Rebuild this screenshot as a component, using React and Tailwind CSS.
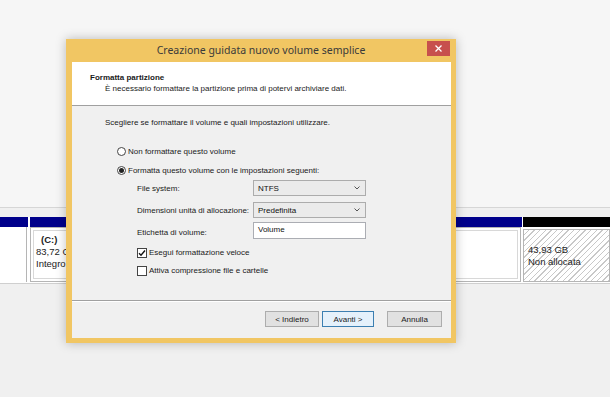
import React from "react";

const Radio = ({ checked }) => (
  <span className="w-[9px] h-[9px] rounded-full border border-[#444] bg-white flex items-center justify-center shrink-0">
    {checked && <span className="w-[5px] h-[5px] rounded-full bg-[#222]" />}
  </span>
);

const Check = ({ checked }) => (
  <span className="w-[10px] h-[10px] border border-[#444] bg-white flex items-center justify-center shrink-0">
    {checked && (
      <svg width="8" height="8" viewBox="0 0 8 8">
        <path d="M1 4.2 L3 6.2 L7 1.5" stroke="#111" strokeWidth="1.4" fill="none" />
      </svg>
    )}
  </span>
);

const Select = ({ value }) => (
  <div className="w-[113px] h-[16px] border border-[#acacac] bg-[#ebebeb] flex items-center justify-between pl-[4px] pr-[5px] text-[#111]">
    <span>{value}</span>
    <svg width="6" height="4" viewBox="0 0 6 4">
      <path d="M0.5 0.5 L3 3 L5.5 0.5" stroke="#555" strokeWidth="1" fill="none" />
    </svg>
  </div>
);

const Button = ({ children, w, primary }) => (
  <div
    className={
      "h-[16px] flex items-center justify-center border " +
      w +
      (primary ? " border-[#3c7fb1] bg-[#e5f1fb]" : " border-[#adadad] bg-[#e1e1e1]")
    }
  >
    {children}
  </div>
);

export default function App() {
  return (
    <div className="relative w-[610px] h-[397px] overflow-hidden bg-[#f0f0f0] font-['Liberation_Sans',Arial,sans-serif]">
      {/* disk management behind the wizard */}
      <div className="h-[208px] bg-[#f6f6f6] border-b border-[#d6d6d6]" />
      <div className="h-[9px]" />
      <div className="flex h-[10px] bg-white">
        <div className="w-[28px] bg-[#00008b]" />
        <div className="w-[2px]" />
        <div className="w-[492px] bg-[#00008b]" />
        <div className="w-[1px]" />
        <div className="flex-1 bg-black" />
      </div>
      <div className="flex h-[55px] bg-white text-[9.5px] text-[#222] leading-[12px]">
        <div className="w-[27px] border-r border-[#b5b5b5]" />
        <div className="w-[3px]" />
        <div className="w-[491px] border border-[#b5b5b5] p-[2px]">
          <div className="h-full border border-[#d8d8d8] pl-[2px] pt-[3px]">
            <div className="pl-[5px] font-bold">(C:)</div>
            <div>83,72 GB NTFS</div>
            <div>Integro</div>
          </div>
        </div>
        <div className="flex-1 pl-[2px] pt-[2px]">
          <div className="h-full border border-[#b5b5b5] bg-[repeating-linear-gradient(135deg,#ffffff_0px,#ffffff_3px,#c8c8c8_3px,#c8c8c8_4px)] pl-[4px] pt-[14px]">
            <div>43,93 GB</div>
            <div>Non allocata</div>
          </div>
        </div>
      </div>
      <div className="h-[2px] bg-white border-b border-[#cfcfcf]" />

      {/* wizard window */}
      <div className="absolute left-[66px] top-[39px] w-[390px] h-[304px] bg-[#f1c663] flex flex-col pl-[6px] pr-[5px] pb-[5px] shadow-[0_0_10px_rgba(0,0,0,0.25)]">
        <div className="relative h-[23px] -ml-[6px] -mr-[5px] flex items-center justify-center">
          <span className="font-['Noto_Sans',sans-serif] text-[10.5px] text-[#3a3a3a]">
            Creazione guidata nuovo volume semplice
          </span>
          <div className="absolute right-[6px] top-[2px] w-[23px] h-[15px] bg-[#c7504d] flex items-center justify-center">
            <svg width="7" height="7" viewBox="0 0 7 7">
              <path d="M0.5 0.5 L6.5 6.5 M6.5 0.5 L0.5 6.5" stroke="#fff" strokeWidth="1.3" />
            </svg>
          </div>
        </div>

        <div className="flex-1 flex flex-col bg-[#f0f0f0] text-[8px] leading-[11px] text-[#1a1a1a]">
          <div className="h-[44px] bg-white border-b border-[#a0a0a0] pl-[18px] pt-[10px]">
            <div className="font-bold">Formatta partizione</div>
            <div className="pl-[15px]">È necessario formattare la partizione prima di potervi archiviare dati.</div>
          </div>

          <div className="h-[195px] border-b border-[#a0a0a0] pl-[33px] pt-[11px]">
            <div>Scegliere se formattare il volume e quali impostazioni utilizzare.</div>
            <div className="mt-[18px] ml-[12px] flex items-center gap-[2px] h-[11px]">
              <Radio />
              <span>Non formattare questo volume</span>
            </div>
            <div className="mt-[8px] ml-[12px] flex items-center gap-[2px] h-[11px]">
              <Radio checked />
              <span>Formatta questo volume con le impostazioni seguenti:</span>
            </div>
            <div className="ml-[32px] mt-[4px] flex flex-col">
              <div className="flex items-center">
                <span className="w-[116px]">File system:</span>
                <Select value="NTFS" />
              </div>
              <div className="flex items-center mt-[6px]">
                <span className="w-[116px]">Dimensioni unità di allocazione:</span>
                <Select value="Predefinita" />
              </div>
              <div className="flex items-center mt-[4px]">
                <span className="w-[116px] pt-[3px]">Etichetta di volume:</span>
                <div className="w-[113px] h-[17px] border border-[#abadb3] bg-white pl-[4px] pt-[1px] text-[#111]">
                  Volume
                </div>
              </div>
              <div className="flex items-center gap-[2px] mt-[8px] h-[11px]">
                <Check checked />
                <span>Esegui formattazione veloce</span>
              </div>
              <div className="flex items-center gap-[2px] mt-[7px] h-[11px]">
                <Check />
                <span>Attiva compressione file e cartelle</span>
              </div>
            </div>
          </div>

          <div className="flex-1 border-t border-white flex justify-end items-start pt-[9px] pr-[9px]">
            <Button w="w-[54px]">&lt; Indietro</Button>
            <div className="w-[3px]" />
            <Button w="w-[52px]" primary>Avanti &gt;</Button>
            <div className="w-[13px]" />
            <Button w="w-[55px]">Annulla</Button>
          </div>
        </div>
      </div>
    </div>
  );
}
